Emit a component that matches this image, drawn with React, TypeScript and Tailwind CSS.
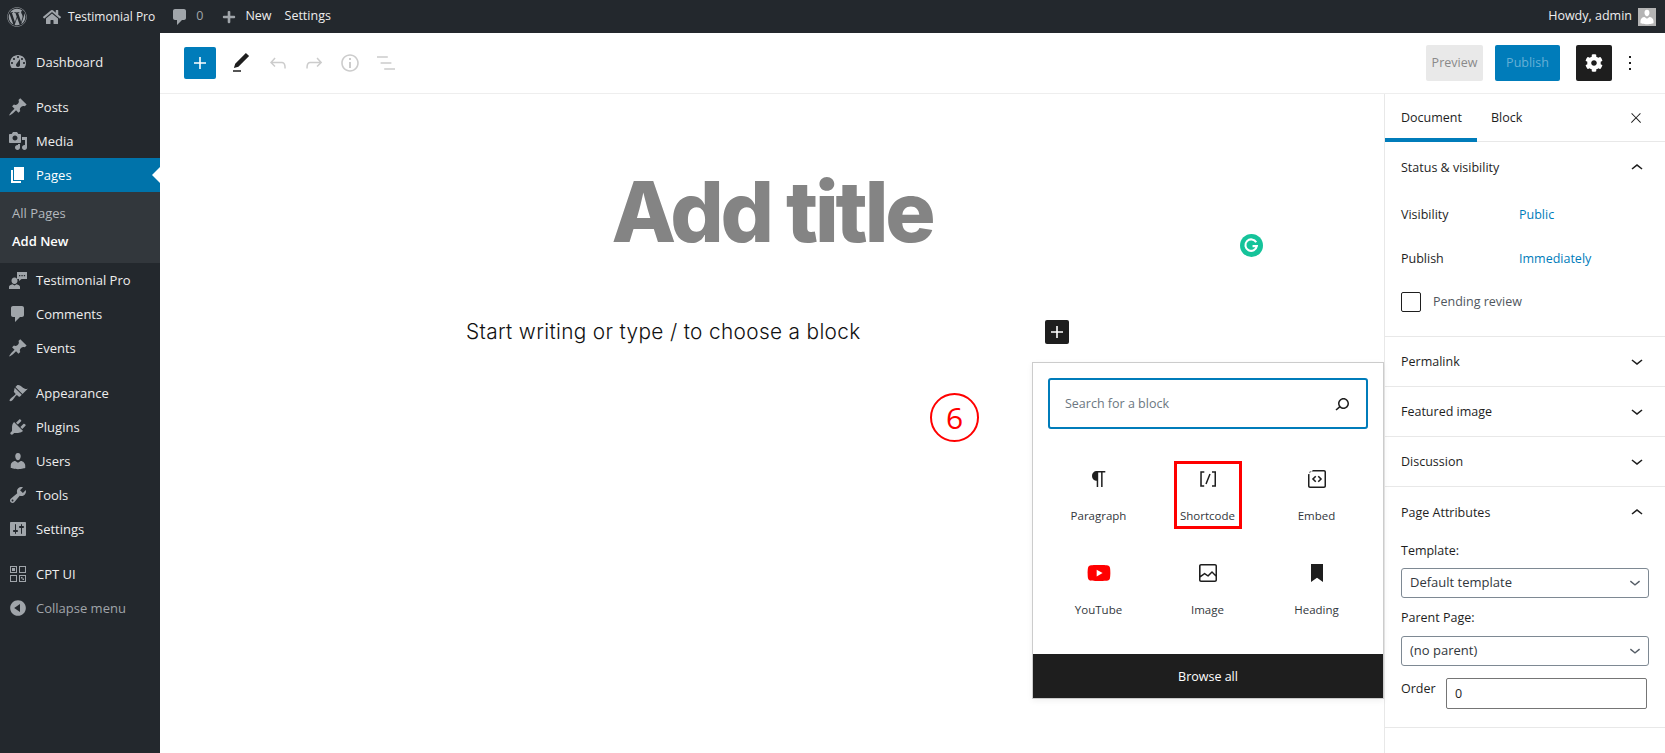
import { FaWordpress, FaHome, FaCog, FaYoutube, FaPlus } from "react-icons/fa";

function Glyph({ d, box = 24, size = 24, className = "" }: { d: string; box?: number; size?: number; className?: string }) {
  return (
    <svg viewBox={`0 0 ${box} ${box}`} width={size} height={size} className={className} fill="currentColor" fillRule="evenodd">
      <path d={d} />
    </svg>
  );
}

const dash = {
  dashboard: "M3.76 16h12.48c1.1-1.37 1.76-3.11 1.76-5 0-4.42-3.58-8-8-8s-8 3.58-8 8c0 1.89.66 3.63 1.76 5zM10 4c.55 0 1 .45 1 1s-.45 1-1 1-1-.45-1-1 .45-1 1-1zM6 6c.55 0 1 .45 1 1s-.45 1-1 1-1-.45-1-1 .45-1 1-1zm8 0c.55 0 1 .45 1 1s-.45 1-1 1-1-.45-1-1 .45-1 1-1zm-5.37 5.55L12 7v6c0 1.1-.9 2-2 2s-2-.9-2-2c0-.57.24-1.08.63-1.45zM4 10c.55 0 1 .45 1 1s-.45 1-1 1-1-.45-1-1 .45-1 1-1zm12 0c.55 0 1 .45 1 1s-.45 1-1 1-1-.45-1-1 .45-1 1-1z",
  pin: "M10.44 3.02l1.82-1.82 6.36 6.35-1.83 1.82c-1.05-.68-2.48-.57-3.41.36l-.75.75c-.92.93-1.04 2.35-.35 3.41l-1.83 1.82-2.41-2.41-2.8 2.79c-.42.42-3.38 2.71-3.8 2.29s1.86-3.39 2.28-3.81l2.79-2.79L4.1 9.36l1.83-1.82c1.05.69 2.48.57 3.4-.36l.75-.75c.93-.92 1.05-2.35.36-3.41z",
  media: "M13 11V4c0-.55-.45-1-1-1h-1.67L9 1H5L3.67 3H2c-.55 0-1 .45-1 1v7c0 .55.45 1 1 1h10c.55 0 1-.45 1-1zM7 4.5c1.38 0 2.5 1.12 2.5 2.5S8.38 9.5 7 9.5 4.5 8.38 4.5 7 5.62 4.5 7 4.5zM14 6h5v10.5c0 1.38-1.12 2.5-2.5 2.5S14 17.88 14 16.5s1.12-2.5 2.5-2.5c.17 0 .34.02.5.05V9h-3V6zm-4 8.05V13h2v3.5c0 1.38-1.12 2.5-2.5 2.5S7 17.88 7 16.5 8.12 14 9.5 14c.17 0 .34.02.5.05z",
  pages: "M6 15V2h10v13H6zm-1 1h8v2H3V5h2v11z",
  comment: "M5 2h9c1.1 0 2 .9 2 2v7c0 1.1-.9 2-2 2h-2l-5 5v-5H5c-1.1 0-2-.9-2-2V4c0-1.1.9-2 2-2z",
  brush: "M14.5 11L7.4 4l1.5-1.5c.5-.6 2.3-.5 3.5.3 1.2.8 1.4 1.3 2.9 2.1 1.2.6 2.5 1.3 4.5.9zM6.7 4.7l7.1 7.1-1.8 1.7c-.4.4-1 .4-1.4 0l-1.1-1c-.4-.4-1-.4-1.4 0-.6.6-1.1 1.4-1.7 2.2-.9 1.2-2.4 3.3-3.6 3.5-.8.1-1.3-.4-1.2-1.2.2-1.2 2.3-2.7 3.5-3.6.8-.6 1.5-1.1 2.1-1.7.4-.4.4-1 0-1.4l-1.1-1.1c-.4-.4-.4-1 0-1.4z",
  plugin: "M13.11 4.36L9.87 7.6 8 5.73l3.24-3.24c.35-.34 1.05-.2 1.56.32.52.51.66 1.21.31 1.55zm-8 1.77l.91-1.12 9.01 9.01-1.19.84c-.71.71-2.63 1.16-3.82 1.16H6.14L4.9 17.26c-.59.59-1.54.59-2.12 0-.59-.58-.59-1.53 0-2.12l1.24-1.24v-3.88c0-1.13.4-3.19 1.09-3.89zm7.26 3.97l3.24-3.24c.34-.35 1.04-.21 1.55.31.52.51.66 1.21.31 1.55l-3.24 3.25z",
  users: "M10 9.25c-2.27 0-2.73-3.44-2.73-3.44C7 4.02 7.82 2 9.97 2c2.16 0 2.98 2.02 2.71 3.81 0 0-.41 3.44-2.68 3.44zm0 2.57L12.72 10c2.39 0 4.52 2.33 4.52 4.53v2.49s-3.65 1.13-7.24 1.13c-3.65 0-7.24-1.13-7.24-1.13v-2.49c0-2.25 1.94-4.48 4.47-4.48z",
  tools: "M16.68 9.77c-1.34 1.34-3.3 1.67-4.95.99l-5.41 6.52c-.99.99-2.59.99-3.58 0s-.99-2.59 0-3.57l6.52-5.42c-.68-1.65-.35-3.61.99-4.95 1.28-1.28 3.12-1.62 4.72-1.06l-2.89 2.89 2.82 2.82 2.86-2.87c.53 1.58.18 3.39-1.08 4.65zM3.81 16.21c.4.39 1.04.39 1.43 0 .4-.4.4-1.04 0-1.43-.39-.4-1.03-.4-1.43 0-.39.39-.39 1.03 0 1.43z",
  settings: "M18 16V4c0-.55-.45-1-1-1H3c-.55 0-1 .45-1 1v12c0 .55.45 1 1 1h14c.55 0 1-.45 1-1zM8 11h1c.55 0 1 .45 1 1s-.45 1-1 1H8v1.5c0 .28-.22.5-.5.5s-.5-.22-.5-.5V13H6c-.55 0-1-.45-1-1s.45-1 1-1h1V5.5c0-.28.22-.5.5-.5s.5.22.5.5V11zm5-2h-1c-.55 0-1-.45-1-1s.45-1 1-1h1V5.5c0-.28.22-.5.5-.5s.5.22.5.5V7h1c.55 0 1 .45 1 1s-.45 1-1 1h-1v5.5c0 .28-.22.5-.5.5s-.5-.22-.5-.5V9z",
  collapse: "M10 2.16c4.33 0 7.84 3.51 7.84 7.84s-3.51 7.84-7.84 7.84S2.16 14.33 2.16 10 5.71 2.16 10 2.16zm2 11.72V6.12L6.18 9.97z",
  cpt: "M2 2h7v7H2zM3 3v5h5V3zM11 2h7v7h-7zM12 3v5h5V3zM2 11h7v7H2zM3 12v5h5v-5zM11 11h7v7h-7zM12 12v5h5v-5zM4 4h1.5v1.5H4zM5.5 5.5H7V7H5.5zM13 13h1.5v1.5H13zM14.5 14.5H16V16h-1.5zM4 5.5h1.5V7H4zM5.5 4H7v1.5H5.5z",
  testimonial: "M6.5 7.5c2 0 3 1.5 3 3.2 0 1.8-1.2 3.4-3 3.4s-3-1.6-3-3.4c0-1.7 1-3.2 3-3.2zM1 19v-2.2c0-1.3 1.6-2.2 3.4-2.6l2.1 1.4 2.1-1.4c1.8.4 3.4 1.3 3.4 2.6V19zM9 2h10v7h-5.5L11 11V9H9zM11 5v1.3h1.3V5zM13.4 5v1.3h1.3V5zM15.8 5v1.3h1.3V5z",
};

const wp = {
  plus: "M18 11.2h-5.2V6h-1.6v5.2H6v1.6h5.2V18h1.6v-5.2H18z",
  edit: "M20.1 5.1L16.9 2 6.2 12.7l-1.3 4.4 4.5-1.3L20.1 5.1zM4 20.8h8v-1.5H4v1.5z",
  undo: "M18.3 11.7c-.6-.6-1.4-.9-2.3-.9H6.7l2.9-3.3-1.1-1-4.5 5L8.5 16l1-1-2.7-2.7H16c.5 0 .9.2 1.3.5 1 1 1 3.4 1 4.5v.3h1.5v-.2c0-1.5 0-4.3-1.5-5.7z",
  redo: "M15.6 6.5l-1.1 1 2.9 3.3H8c-.9 0-1.7.3-2.3.9-1.4 1.5-1.4 4.2-1.4 5.6v.2h1.5v-.3c0-1.1 0-3.5 1-4.5.3-.3.7-.5 1.3-.5h9.2L14.5 15l1.1 1.1 4.6-4.6-4.6-5z",
  info: "M12 3.2c-4.8 0-8.8 3.9-8.8 8.8 0 4.8 3.9 8.8 8.8 8.8 4.8 0 8.8-3.9 8.8-8.8 0-4.8-4-8.8-8.8-8.8zm0 16c-4 0-7.2-3.3-7.2-7.2C4.8 8 8 4.8 12 4.8s7.2 3.3 7.2 7.2c0 4-3.2 7.2-7.2 7.2zM11 17h2v-6h-2v6zm0-8h2V7h-2v2z",
  list: "M13.8 5.2H3v1.5h10.8V5.2zm-3.6 12v1.5H21v-1.5H10.2zm7.2-6H6.6v1.5h10.8v-1.5z",
  more: "M13 19h-2v-2h2v2zm0-6h-2v-2h2v2zm0-6h-2V5h2v2z",
  close: "M13 11.8l6.1-6.3-1-1-6.1 6.2-6.1-6.2-1 1 6.1 6.3-6.5 6.7 1 1 6.5-6.6 6.5 6.6 1-1z",
  down: "M17.5 10.6L12 15l-5.5-4.4.9-1.2L12 13l4.5-3.6 1 1.2z",
  up: "M6.5 13.4L12 9l5.5 4.4-.9 1.2L12 11l-4.5 3.6-1-1.2z",
  search: "M13.5 6C10.5 6 8 8.5 8 11.5c0 1.1.3 2.1.9 3l-3.4 3 1 1.1 3.4-2.9c1 .9 2.2 1.4 3.6 1.4 3 0 5.5-2.5 5.5-5.5C19 8.5 16.5 6 13.5 6zm0 9.5c-2.2 0-4-1.8-4-4s1.8-4 4-4 4 1.8 4 4-1.8 4-4 4z",
  paragraph: "M18.3 4H9.9v-.1l-.9.2c-2.3.4-4 2.4-4 4.8s1.7 4.4 4 4.8l.7.1V20h1.5V5.5h2.9V20h1.5V5.5h2.7V4z",
  shortcode: "M16 4.2v1.5h2.5v12.5H16v1.5h4V4.2h-4zM4.2 19.8h4v-1.5H5.8V5.8h2.5V4.2h-4l-.1 15.6zm5.1-3.1l1.4.6 4-10-1.4-.6-4 10z",
  embed: "M19 3H8L3 7.5V19c0 1.1.9 2 2 2h14c1.1 0 2-.9 2-2V5c0-1.1-.9-2-2-2zm.5 16c0 .3-.2.5-.5.5H5c-.3 0-.5-.2-.5-.5V5c0-.3.2-.5.5-.5h14c.3 0 .5.2.5.5zM10.2 8.8l1.1 1L9 12l2.3 2.2-1.1 1L6.9 12zM13.8 8.8l-1.1 1L15 12l-2.3 2.2 1.1 1 3.3-3.2z",
  image: "M19 3H5c-1.1 0-2 .9-2 2v14c0 1.1.9 2 2 2h14c1.1 0 2-.9 2-2V5c0-1.1-.9-2-2-2zM5 4.5h14c.3 0 .5.2.5.5v8.4l-3-2.9c-.3-.3-.8-.3-1 0L11.9 14 9 12c-.3-.2-.6-.2-.8 0l-3.6 2.6V5c-.1-.3.1-.5.4-.5zm14 15H5c-.3 0-.5-.2-.5-.5v-2.4l4.1-3 3 1.9c.3.2.7.2.9-.1L16 12l3.5 3.4V19c0 .3-.2.5-.5.5z",
  bookmark: "M18 3H6v18l6-4.2 6 4.2z",
};

function MenuRow({ icon, label, className = "" }: { icon: React.ReactNode; label: string; className?: string }) {
  return (
    <div className={`h-[34px] flex items-center text-[13px] text-[#eeeeee] ${className}`}>
      <span className="w-[36px] pl-[8px] flex items-center text-[#a0a5aa]">{icon}</span>
      <span className="pt-[1px]">{label}</span>
    </div>
  );
}

function Sidebar() {
  return (
    <aside className="w-[160px] shrink-0 bg-[#23282d] pt-[12px]">
      <MenuRow icon={<Glyph d={dash.dashboard} box={20} size={20} />} label="Dashboard" className="mb-[11px]" />
      <MenuRow icon={<Glyph d={dash.pin} box={20} size={20} />} label="Posts" />
      <MenuRow icon={<Glyph d={dash.media} box={20} size={20} />} label="Media" />
      <div className="relative h-[34px] bg-[#0073aa] flex items-center text-[13px] text-white">
        <span className="w-[36px] pl-[8px] flex items-center">
          <Glyph d={dash.pages} box={20} size={20} />
        </span>
        <span className="pt-[1px]">Pages</span>
        <span className="absolute right-0 top-[9px] border-y-[8px] border-r-[8px] border-y-transparent border-r-white" />
      </div>
      <div className="h-[71px] bg-[#32373c] pt-[8px] text-[13px]">
        <div className="h-[28px] pl-[12px] flex items-center text-[#b4b9be]">All Pages</div>
        <div className="h-[28px] pl-[12px] flex items-center text-white font-semibold">Add New</div>
      </div>
      <MenuRow icon={<Glyph d={dash.testimonial} box={20} size={20} />} label="Testimonial Pro" />
      <MenuRow icon={<Glyph d={dash.comment} box={20} size={20} />} label="Comments" />
      <MenuRow icon={<Glyph d={dash.pin} box={20} size={20} />} label="Events" className="mb-[11px]" />
      <MenuRow icon={<Glyph d={dash.brush} box={20} size={20} />} label="Appearance" />
      <MenuRow icon={<Glyph d={dash.plugin} box={20} size={20} />} label="Plugins" />
      <MenuRow icon={<Glyph d={dash.users} box={20} size={20} />} label="Users" />
      <MenuRow icon={<Glyph d={dash.tools} box={20} size={20} />} label="Tools" />
      <MenuRow icon={<Glyph d={dash.settings} box={20} size={20} />} label="Settings" className="mb-[11px]" />
      <MenuRow icon={<Glyph d={dash.cpt} box={20} size={20} />} label="CPT UI" />
      <div className="h-[34px] flex items-center text-[13px] text-[#a0a5aa]">
        <span className="w-[36px] pl-[8px] flex items-center">
          <Glyph d={dash.collapse} box={20} size={20} />
        </span>
        <span className="pt-[1px]">Collapse menu</span>
      </div>
    </aside>
  );
}

function AdminBar() {
  return (
    <header className="h-[33px] bg-[#23282d] flex items-center text-[12.5px] text-[#eeeeee] pl-[7px] pr-[9px]">
      <FaWordpress size={20} className="text-[#a0a5aa]" />
      <FaHome size={18} className="text-[#a0a5aa] ml-[16px]" />
      <span className="ml-[7px] text-[12px]">Testimonial Pro</span>
      <Glyph d={dash.comment} box={20} size={20} className="text-[#a0a5aa] ml-[15px]" />
      <span className="ml-[6px] text-[#a0a5aa]">0</span>
      <FaPlus size={14} className="text-[#a0a5aa] ml-[19px]" />
      <span className="ml-[9px]">New</span>
      <span className="ml-[13px]">Settings</span>
      <span className="ml-auto">Howdy, admin</span>
      <span className="ml-[6px] w-[18px] h-[18px] bg-[#b4b4b4] flex items-end justify-center overflow-hidden">
        <Glyph d={dash.users} box={20} size={18} className="text-white" />
      </span>
    </header>
  );
}

function Toolbar() {
  return (
    <div className="h-[61px] border-b border-[#eeeeee] flex items-center pl-[24px] pr-[23px] text-[#cccccc]">
      <button className="w-[32px] h-[32px] rounded-[2px] bg-[#007cba] text-white flex items-center justify-center">
        <Glyph d={wp.plus} />
      </button>
      <Glyph d={wp.edit} className="ml-[13px] text-[#1e1e1e]" />
      <Glyph d={wp.undo} className="ml-[13px]" />
      <Glyph d={wp.redo} className="ml-[12px]" />
      <Glyph d={wp.info} className="ml-[12px]" />
      <Glyph d={wp.list} className="ml-[12px]" />
      <button className="ml-auto w-[57px] h-[36px] rounded-[2px] bg-[#e9e9e9] text-[12.5px] text-[#8a8a8a]">Preview</button>
      <button className="ml-[12px] w-[65px] h-[36px] rounded-[2px] bg-[#007cba] text-[12.5px] text-[#66b0d6]">Publish</button>
      <button className="ml-[16px] w-[36px] h-[36px] rounded-[2px] bg-[#1e1e1e] text-white flex items-center justify-center">
        <FaCog size={18} />
      </button>
      <Glyph d={wp.more} className="ml-[6px] text-[#1e1e1e]" />
    </div>
  );
}

function PanelHead({ title, open = false, collapsedRow = true }: { title: string; open?: boolean; collapsedRow?: boolean }) {
  return (
    <div className={`h-[50px] pl-[16px] pr-[16px] flex items-center justify-between text-[12.5px] font-medium text-[#1e1e1e] ${collapsedRow ? "border-b border-[#e8e8e8]" : ""}`}>
      <span className="pt-[2px]">{title}</span>
      <Glyph d={open ? wp.up : wp.down} />
    </div>
  );
}

function SelectBox({ value, className = "" }: { value: string; className?: string }) {
  return (
    <div className={`w-[248px] h-[30px] rounded-[3px] border border-[#7e8993] pl-[8px] pr-[2px] flex items-center justify-between text-[13px] text-[#32373c] ${className}`}>
      {value}
      <Glyph d={wp.down} size={22} className="text-[#555d66]" />
    </div>
  );
}

function SettingsPanel() {
  return (
    <div className="w-[281px] shrink-0 border-l border-[#e8e8e8] text-[12.5px] text-[#1e1e1e]">
      <div className="h-[48px] border-b border-[#e8e8e8] flex items-center">
        <div className="w-[92px] h-[48px] border-b-4 border-[#007cba] pl-[16px] pt-[6px] flex items-center font-medium">Document</div>
        <div className="ml-[14px] pt-[2px] font-medium">Block</div>
        <Glyph d={wp.close} size={16} className="ml-auto mr-[21px]" />
      </div>
      <div className="h-[195px] border-b border-[#e8e8e8]">
        <PanelHead title="Status & visibility" open collapsedRow={false} />
        <div className="h-[44px] flex items-center pl-[16px] pt-[2px]">
          <span className="w-[118px]">Visibility</span>
          <span className="flex-1 text-[#007cba]">Public</span>
        </div>
        <div className="h-[44px] flex items-center pl-[16px] pt-[2px]">
          <span className="w-[118px]">Publish</span>
          <span className="flex-1 text-[#007cba]">Immediately</span>
        </div>
        <div className="flex items-center pl-[16px] pt-[12px] text-[#50575e]">
          <span className="w-[20px] h-[20px] rounded-[2px] border border-[#1e1e1e] bg-white" />
          <span className="ml-[12px]">Pending review</span>
        </div>
      </div>
      <PanelHead title="Permalink" />
      <PanelHead title="Featured image" />
      <PanelHead title="Discussion" />
      <div className="h-[241px] border-b border-[#e8e8e8]">
        <PanelHead title="Page Attributes" open collapsedRow={false} />
        <div className="pl-[16px] pr-[16px]">
          <div className="leading-[18px] pt-[5px]">Template:</div>
          <SelectBox value="Default template" className="mt-[8px]" />
          <div className="leading-[18px] mt-[11px]">Parent Page:</div>
          <SelectBox value="(no parent)" className="mt-[9px]" />
          <div className="flex mt-[12px]">
            <span className="leading-[18px] w-[45px] pt-[2px]">Order</span>
            <span className="w-[201px] h-[31px] rounded-[2px] border border-[#757575] pl-[8px] pt-[1px] flex items-center">0</span>
          </div>
        </div>
      </div>
    </div>
  );
}

function BlockCell({ icon, label, marked = false }: { icon: React.ReactNode; label: string; marked?: boolean }) {
  return (
    <div className="relative h-[94px] flex flex-col items-center text-[11.5px] text-[#1e1e1e]">
      <span className="h-[24px] mt-[11px] flex items-center">{icon}</span>
      <span className="mt-[16px] leading-[18px] text-[#32373c]">{label}</span>
      {marked && <span className="absolute left-1/2 -translate-x-1/2 top-[5px] w-[68px] h-[68px] border-[3px] border-[#ff0000]" />}
    </div>
  );
}

function BlockInserter() {
  return (
    <div className="absolute left-[872px] top-[268px] w-[352px] h-[337px] bg-white border border-[#cccccc] shadow-[0_2px_6px_rgba(0,0,0,0.06)] flex flex-col font-['Open_Sans',sans-serif]">
      <div className="ml-[15px] mt-[15px] w-[320px] h-[51px] rounded-[3px] border-2 border-[#007cba] pl-[15px] pr-[12px] flex items-center justify-between text-[12.5px] text-[#6c7781]">
        <span className="pt-[2px]">Search for a block</span>
        <Glyph d={wp.search} className="text-[#1e1e1e]" />
      </div>
      <div className="grid grid-cols-[repeat(3,109px)] px-[11px] mt-[27px]">
        <BlockCell icon={<Glyph d={wp.paragraph} />} label="Paragraph" />
        <BlockCell icon={<Glyph d={wp.shortcode} />} label="Shortcode" marked />
        <BlockCell icon={<Glyph d={wp.embed} />} label="Embed" />
        <BlockCell icon={<FaYoutube size={24} className="text-[#ff0000]" />} label="YouTube" />
        <BlockCell icon={<Glyph d={wp.image} />} label="Image" />
        <BlockCell icon={<Glyph d={wp.bookmark} />} label="Heading" />
      </div>
      <div className="mt-auto h-[44px] bg-[#1e1e1e] pt-[2px] text-white text-[12.5px] font-medium flex items-center justify-center">Browse all</div>
    </div>
  );
}

export default function App() {
  return (
    <div className="h-[753px] w-[1665px] overflow-hidden bg-white flex flex-col font-['Open_Sans',sans-serif]">
      <AdminBar />
      <div className="flex flex-1 min-h-0">
        <Sidebar />
        <main className="flex-1 flex flex-col min-w-0">
          <Toolbar />
          <div className="flex flex-1 min-h-0">
            <div className="relative flex-1 font-['Inter',sans-serif]">
              <h1 className="mt-[68px] text-center text-[84px] leading-[100px] font-extrabold tracking-[-3.2px] text-[#848484]">Add title</h1>
              <p className="mt-[54px] mx-auto w-[612px] text-[20.8px] leading-[32px] font-light text-[#111111] tracking-[0.35px]">Start writing or type / to choose a block</p>
              <button className="absolute left-[885px] top-[226px] w-[24px] h-[24px] rounded-[2px] bg-[#1e1e1e] text-white flex items-center justify-center">
                <Glyph d={wp.plus} />
              </button>
              <svg viewBox="0 0 22 22" width={23} height={23} className="absolute left-[1080px] top-[140px]">
                <circle cx="11" cy="11" r="11" fill="#15c39a" />
                <path d="M15.5 8a5.5 5.5 0 1 0 .6 3.6H12" fill="none" stroke="#fff" strokeWidth="2" />
              </svg>
              <div className="absolute left-[770px] top-[299px] w-[49px] h-[49px] rounded-full border-[2.5px] border-[#ff0000] flex items-center justify-center text-[#ff0000] text-[30px] font-medium font-['Open_Sans',sans-serif]">6</div>
              <BlockInserter />
            </div>
            <SettingsPanel />
          </div>
        </main>
      </div>
    </div>
  );
}
